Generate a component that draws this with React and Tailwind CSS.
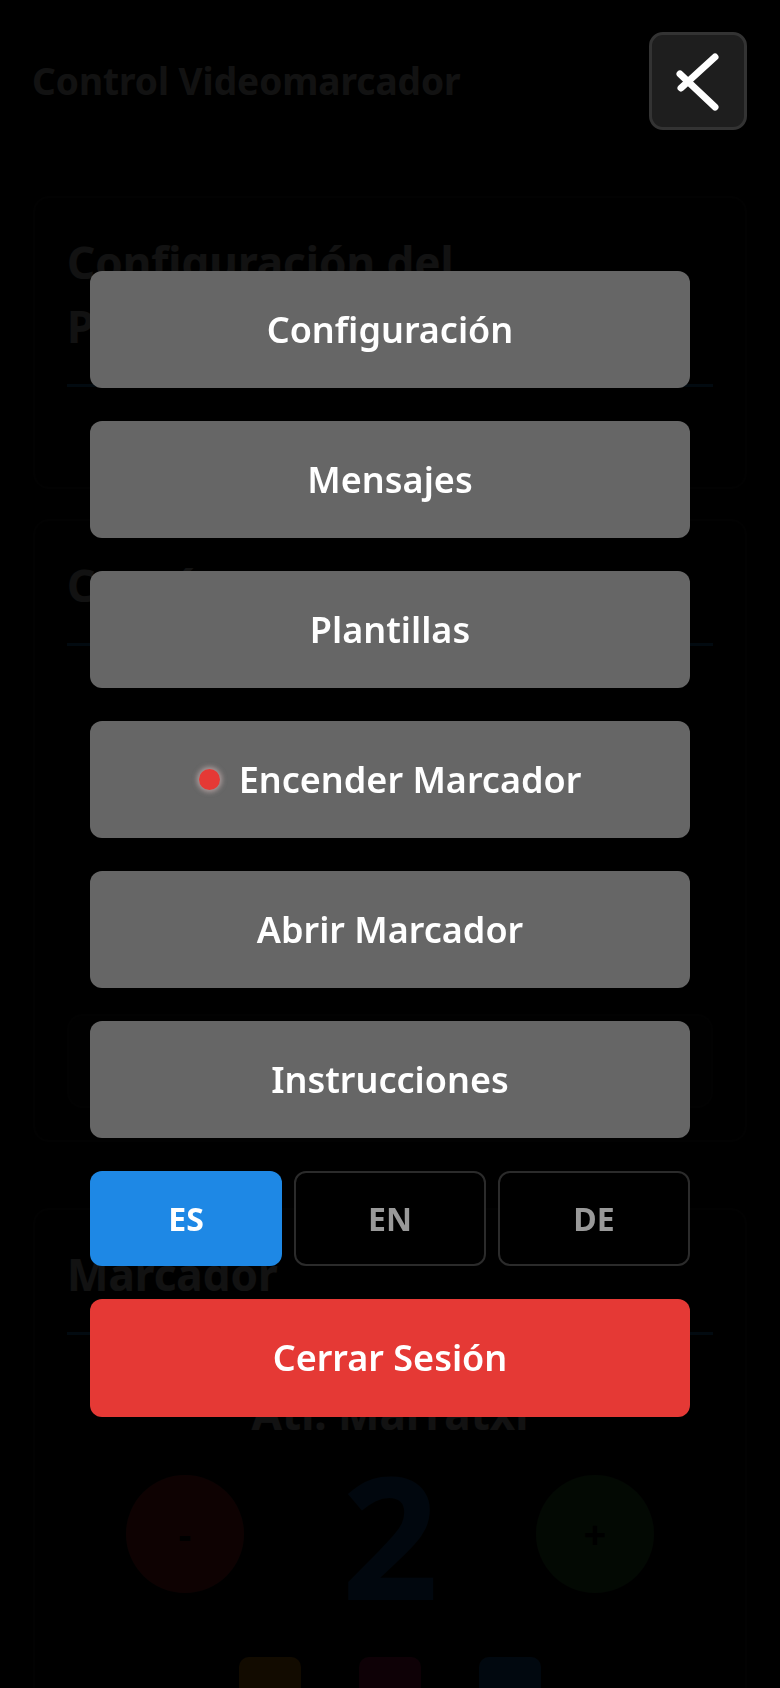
import { useState } from 'react';

const FONT = { fontFamily: '"Noto Sans", "Open Sans", sans-serif' };

const MENU_ITEMS = ['Configuración', 'Mensajes', 'Plantillas', 'Encender Marcador', 'Abrir Marcador', 'Instrucciones'];
const LANGS = ['ES', 'EN', 'DE'];

function CloseIcon() {
    return (
        <svg width="92" height="92" viewBox="3 3 92 92" fill="none" stroke="white" strokeWidth="7" strokeLinecap="round">
            <line x1="66" y1="25" x2="32" y2="56" />
            <line x1="31" y1="42" x2="66" y2="75" />
        </svg>
    );
}

function SectionTitle({ children }) {
    return (
        <h2 className="text-[44px] font-bold leading-[64px] text-white pb-[26px] border-b-[3px] border-[#1e88e5]">{children}</h2>
    );
}

function BackgroundPage() {
    return (
        <div className="flex flex-col px-[33px] pb-10">
            <div className="h-[66px]" />
            <div className="rounded-[16px] border-2 border-[#1f1f1f] bg-[#0c0c0c] px-[32px] pt-[32px] pb-[100px]">
                <SectionTitle>
                    Configuración del
                    <br />
                    Partido
                </SectionTitle>
            </div>
            <div className="mt-[30px] rounded-[16px] border-2 border-[#1f1f1f] bg-[#0c0c0c] px-[32px] pt-[32px] pb-[32px] flex flex-col gap-6">
                <SectionTitle>Cronómetro</SectionTitle>
                <div className="h-[320px]" />
                <div className="h-[94px] rounded-[16px] border-2 border-[#1f1f1f] bg-[#101010]" />
            </div>
            <div className="mt-[66px] rounded-[16px] border-2 border-[#1f1f1f] bg-[#0c0c0c] px-[32px] pt-[32px] flex flex-col items-center">
                <div className="self-stretch">
                    <SectionTitle>Marcador</SectionTitle>
                </div>
                <div className="mt-[56px] text-[44px] font-bold leading-none text-white">Atl. Marratxi</div>
                <div className="mt-[14px] w-[528px] flex items-center justify-between">
                    <div className="w-[118px] h-[118px] rounded-full bg-[#c62828] flex items-center justify-center text-[40px] font-bold text-black">-</div>
                    <div className="text-[170px] font-bold leading-none text-[#1565c0]">2</div>
                    <div className="w-[118px] h-[118px] rounded-full bg-[#2e7d32] flex items-center justify-center text-[40px] font-bold text-black">+</div>
                </div>
                <div className="mt-[38px] flex gap-[58px]">
                    <div className="w-[62px] h-[62px] rounded-[10px] bg-[#ff9800]" />
                    <div className="w-[62px] h-[62px] rounded-[10px] bg-[#c2185b]" />
                    <div className="w-[62px] h-[62px] rounded-[10px] bg-[#1976d2]" />
                </div>
            </div>
        </div>
    );
}

export default function App() {
    const [lang, setLang] = useState('ES');

    return (
        <div className="relative min-h-[1688px] bg-black overflow-hidden" style={FONT}>
            <div className="flex items-center justify-between pl-[32px] pr-[33px] pt-[32px]">
                <h1 className="text-[37px] font-bold text-white">Control Videomarcador</h1>
                <button className="relative z-50 w-[98px] h-[98px] rounded-[14px] bg-[#1e1e1e] border-[3px] border-[#333333] flex items-center justify-center">
                    <CloseIcon />
                </button>
            </div>
            <BackgroundPage />

            <div className="fixed inset-0 z-40 bg-black/[0.93] flex items-center justify-center">
                <div className="w-[600px] flex flex-col gap-[33px]">
                    {MENU_ITEMS.map(item => (
                        <button
                            key={item}
                            className="h-[117px] rounded-[12px] bg-[#666666] text-white text-[36px] font-semibold flex items-center justify-center gap-[19px]"
                        >
                            {item === 'Encender Marcador' && (
                                <span className="w-[21px] h-[21px] rounded-full bg-[#e53935] shadow-[0_0_5px_2px_rgba(230,200,200,0.55)]" />
                            )}
                            {item}
                        </button>
                    ))}
                    <div className="h-[95px] grid grid-cols-3 gap-3">
                        {LANGS.map(l => (
                            <button
                                key={l}
                                onClick={() => setLang(l)}
                                className={`rounded-[12px] text-[32px] font-bold ${
                                    lang === l
                                        ? 'bg-[#1e88e5] text-white'
                                        : 'bg-black border-2 border-[#2b2b2b] text-[#999999]'
                                }`}
                            >
                                {l}
                            </button>
                        ))}
                    </div>
                    <button className="h-[118px] rounded-[12px] bg-[#e53935] text-white text-[36px] font-semibold">
                        Cerrar Sesión
                    </button>
                </div>
            </div>
        </div>
    );
}
